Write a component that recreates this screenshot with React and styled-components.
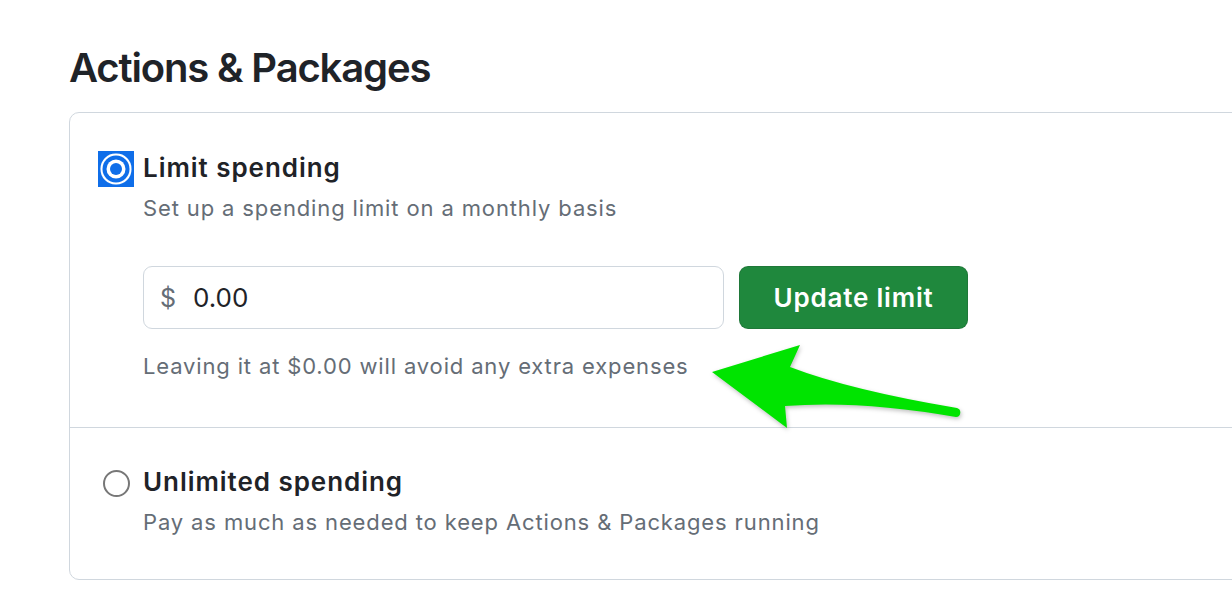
import styled, { createGlobalStyle } from "styled-components";

const GlobalStyle = createGlobalStyle`
	html, body {
		margin: 0;
		padding: 0;
		background: #ffffff;
	}
	body {
		font-family: Inter, "Noto Sans", "Liberation Sans", sans-serif;
		color: #1f2328;
		overflow: hidden;
	}
`;

const options = [
	{
		id: "limit",
		label: "Limit spending",
		description: "Set up a spending limit on a monthly basis",
		checked: true,
	},
	{
		id: "unlimited",
		label: "Unlimited spending",
		description: "Pay as much as needed to keep Actions & Packages running",
		checked: false,
	},
];

function Arrow() {
	return (
		<ArrowSvg width="1232" height="594" viewBox="0 0 1232 594">
			<path
				d="M712 372 L800 345 L790 367 Q850 390 957 408 A4.6 4.6 0 0 1 956 417 Q860 400 785 406 L787 428 Z"
				fill="#00e400"
			/>
		</ArrowSvg>
	);
}

export default function App() {
	return (
		<Page>
			<GlobalStyle />
			<Title>Actions &amp; Packages</Title>
			<Card>
				{options.map(option => (
					<Option key={option.id} $divided={option.id !== "limit"} $first={option.id === "limit"}>
						<RadioCell>{option.checked ? <CheckedRadio><Dot /></CheckedRadio> : <Radio />}</RadioCell>
						<Label>{option.label}</Label>
						<Body>
							<Description>{option.description}</Description>
							{option.checked && (
								<>
									<LimitForm>
										<AmountField>
											<Currency>$</Currency>
											<Amount>0.00</Amount>
										</AmountField>
										<UpdateButton>Update limit</UpdateButton>
									</LimitForm>
									<Hint>Leaving it at $0.00 will avoid any extra expenses</Hint>
								</>
							)}
						</Body>
					</Option>
				))}
			</Card>
			<Arrow />
		</Page>
	);
}

const Page = styled.div`
	position: relative;
	height: 594px;
	box-sizing: border-box;
	padding: 44px 0 0 69px;
`;

const Title = styled.h2`
	margin: 0 0 20px;
	font-size: 40px;
	line-height: 48px;
	font-weight: 600;
	letter-spacing: -1.15px;
	color: #1f2328;
`;

const Card = styled.div`
	width: 1240px;
	border: 1px solid #d0d7de;
	border-radius: 10px;
`;

const Option = styled.div`
	display: grid;
	grid-template-columns: 36px 1fr;
	column-gap: 9px;
	padding: ${p => (p.$first ? "38px 28px 46px" : "37px 28px 42px")};
	border-top: ${p => (p.$divided ? "1px solid #d0d7de" : "none")};
`;

const RadioCell = styled.div`
	width: 36px;
	height: 36px;
	display: flex;
	align-items: center;
	justify-content: center;
`;

const CheckedRadio = styled.span`
	width: 36px;
	height: 36px;
	background: #0f6ee9;
	display: flex;
	align-items: center;
	justify-content: center;
`;

const Dot = styled.span`
	width: 12px;
	height: 12px;
	border-radius: 50%;
	background: #0f6ee9;
	box-shadow: 0 0 0 3.5px #ffffff, 0 0 0 7.5px #0f6ee9, 0 0 0 9.5px #ffffff;
`;

const Radio = styled.span`
	width: 27px;
	height: 27px;
	box-sizing: border-box;
	border-radius: 50%;
	border: 2px solid #777777;
	background: #ffffff;
`;

const Label = styled.div`
	font-size: 26px;
	line-height: 34px;
	padding-bottom: 2px;
	font-weight: 600;
	letter-spacing: 0.95px;
	color: #1f2328;
`;

const Body = styled.div`
	grid-column: 2;
`;

const Description = styled.div`
	margin-top: 6px;
	font-size: 22px;
	line-height: 30px;
	letter-spacing: 0.87px;
	color: #656d76;
`;

const LimitForm = styled.div`
	display: flex;
	gap: 15px;
	margin-top: 43px;
`;

const AmountField = styled.div`
	width: 581px;
	height: 63px;
	box-sizing: border-box;
	border: 1px solid #d0d7de;
	border-radius: 9px;
	display: flex;
	align-items: center;
	padding-left: 16px;
	gap: 17px;
`;

const Currency = styled.span`
	font-size: 25px;
	color: #656d76;
`;

const Amount = styled.span`
	font-size: 26px;
	color: #1f2328;
`;

const UpdateButton = styled.button`
	width: 229px;
	height: 63px;
	border: 1px solid rgba(31, 35, 40, 0.15);
	border-radius: 9px;
	background: #1f883d;
	color: #ffffff;
	font-family: inherit;
	font-size: 26px;
	font-weight: 600;
	letter-spacing: 0.8px;
	cursor: pointer;
`;

const Hint = styled.div`
	margin-top: 22px;
	font-size: 22px;
	line-height: 30px;
	letter-spacing: 0.85px;
	color: #656d76;
`;

const ArrowSvg = styled.svg`
	position: absolute;
	top: 0;
	left: 0;
	pointer-events: none;
	filter: drop-shadow(1px 2px 2px rgba(0, 0, 0, 0.25));
`;
